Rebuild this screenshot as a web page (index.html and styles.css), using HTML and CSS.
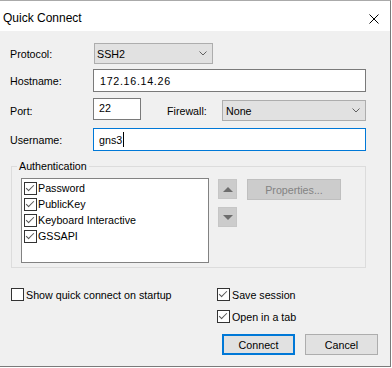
FILE: index.html
```html
<!DOCTYPE html>
<html lang="en">
<head>
    <meta charset="UTF-8">
    <title>Quick Connect</title>
    <link rel="stylesheet" href="styles.css">
</head>
<body>
    <div class="window">
        <!-- Title bar -->
        <div class="titlebar">
            <span class="title">Quick Connect</span>
            <svg class="close" width="10" height="10" viewBox="0 0 10 10">
                <path d="M0.5 0.5L9.5 9.5M9.5 0.5L0.5 9.5" stroke="#000" stroke-width="1" fill="none"/>
            </svg>
        </div>

        <div class="content">
            <!-- Connection fields -->
            <div class="row row-protocol">
                <span class="label">Protocol:</span>
                <div class="combo combo-protocol">
                    <span>SSH2</span>
                    <svg class="chevron" width="8" height="5" viewBox="0 0 8 5"><polyline points="0.5,0.5 4,4 7.5,0.5" fill="none" stroke="#606060"/></svg>
                </div>
            </div>

            <div class="row row-host">
                <span class="label">Hostname:</span>
                <div class="field field-host">172.16.14.26</div>
            </div>

            <div class="row row-port">
                <span class="label">Port:</span>
                <div class="field field-port">22</div>
                <span class="firewall-label">Firewall:</span>
                <div class="combo combo-firewall">
                    <span>None</span>
                    <svg class="chevron" width="8" height="5" viewBox="0 0 8 5"><polyline points="0.5,0.5 4,4 7.5,0.5" fill="none" stroke="#606060"/></svg>
                </div>
            </div>

            <div class="row row-user">
                <span class="label">Username:</span>
                <div class="field field-user">gns3<span class="caret"></span></div>
            </div>

            <!-- Authentication group -->
            <fieldset class="group">
                <legend>Authentication</legend>
                <div class="group-body">
                    <div class="listbox">
                        <div class="list-item"><span class="cb checked"></span><span>Password</span></div>
                        <div class="list-item"><span class="cb checked"></span><span>PublicKey</span></div>
                        <div class="list-item"><span class="cb checked"></span><span>Keyboard Interactive</span></div>
                        <div class="list-item"><span class="cb checked"></span><span>GSSAPI</span></div>
                    </div>
                    <div class="arrows">
                        <div class="arrow-btn">
                            <svg width="10" height="5" viewBox="0 0 10 5"><polygon points="0,5 5,0 10,5" fill="#6d6d6d"/></svg>
                        </div>
                        <div class="arrow-btn">
                            <svg width="10" height="5" viewBox="0 0 10 5"><polygon points="0,0 10,0 5,5" fill="#6d6d6d"/></svg>
                        </div>
                    </div>
                    <div class="props-btn">Properties...</div>
                </div>
            </fieldset>

            <!-- Options -->
            <div class="options">
                <div class="opt-left">
                    <div class="check-item"><span class="cb"></span><span>Show quick connect on startup</span></div>
                </div>
                <div class="opt-right">
                    <div class="check-item"><span class="cb checked"></span><span>Save session</span></div>
                    <div class="check-item"><span class="cb checked"></span><span>Open in a tab</span></div>
                </div>
            </div>

            <!-- Buttons -->
            <div class="buttons">
                <div class="btn btn-default">Connect</div>
                <div class="btn">Cancel</div>
            </div>
        </div>
    </div>
</body>
</html>
```

FILE: styles.css
```css
/* Page */
body {
    margin: 0;
    background-color: #fff;
    font-family: "Liberation Sans", Arial, sans-serif;
    font-size: 10.7px;
    color: #000;
}

/* Window frame */
.window {
    width: 390px;
    height: 365px;
    background-color: #f0f0f0;
    border-top: 1px solid #aaa;
    border-right: 1px solid #7a7a7a;
    border-bottom: 1px solid #7a7a7a;
}

.titlebar {
    height: 30px;
    box-sizing: border-box;
    padding: 4px 11px 0 3px;
    background-color: #fff;
    display: flex;
    align-items: center;
    justify-content: space-between;
}

.title {
    font-size: 12px;
}

.close {
    margin-top: 2px;
}

/* Content */
.content {
    padding: 12px 12px 0 10px;
}

.row {
    display: flex;
    align-items: center;
}

.label {
    width: 83px;
}

.combo {
    box-sizing: border-box;
    height: 21px;
    padding: 0 5px 0 2px;
    background-color: #e1e1e1;
    border: 1px solid #adadad;
    display: flex;
    align-items: center;
    justify-content: space-between;
}

.combo-protocol {
    width: 119px;
    margin-left: 1px;
}

.field {
    box-sizing: border-box;
    width: 273px;
    height: 23px;
    padding: 0 5px;
    background-color: #fff;
    border: 1px solid #7a7a7a;
    display: flex;
    align-items: center;
}

.row-host {
    margin-top: 5px;
}

.field-host {
    padding-left: 6px;
    letter-spacing: 0.7px;
}

.row-port {
    margin-top: 6px;
    height: 23px;
    align-items: flex-start;
}

.row-port .label,
.firewall-label {
    align-self: center;
    margin-top: 2px;
}

.field-port {
    width: 48px;
    height: 22px;
    align-items: flex-start;
    padding-top: 3px;
}

.firewall-label {
    width: 55px;
    margin-left: 26px;
}

.combo-firewall {
    width: 144px;
    margin-top: 2px;
    padding-left: 3px;
}

.row-user {
    margin-top: 7px;
}

.field-user {
    border-color: #0078d7;
}

.caret {
    width: 1px;
    height: 15px;
    margin-left: 1px;
    background-color: #000;
}

/* Authentication group box */
.group {
    box-sizing: border-box;
    width: 355px;
    margin: 9px 0 0 1px;
    padding: 5px 9px 4px 9px;
    border: 1px solid #dcdcdc;
}

.group legend {
    padding: 0 2px;
    margin-left: -4px;
    line-height: 13px;
}

.group-body {
    display: flex;
    align-items: flex-start;
}

.listbox {
    box-sizing: border-box;
    width: 188px;
    height: 85px;
    padding: 1px 2px;
    background-color: #fff;
    border: 1px solid #828282;
}

.list-item {
    height: 16px;
    display: flex;
    align-items: center;
}

.list-item .cb {
    margin-right: 1px;
}

.arrows {
    margin: 1px 0 0 9px;
    display: flex;
    flex-direction: column;
    gap: 8px;
}

.arrow-btn {
    box-sizing: border-box;
    width: 19px;
    height: 20px;
    background-color: #cccccc;
    border: 1px solid #c6c6c6;
    display: flex;
    align-items: center;
    justify-content: center;
}

.props-btn {
    box-sizing: border-box;
    width: 94px;
    height: 21px;
    margin: 1px 0 0 10px;
    background-color: #cccccc;
    border: 1px solid #bfbfbf;
    color: #838383;
    display: flex;
    align-items: center;
    justify-content: center;
}

/* Checkboxes */
.cb {
    position: relative;
    flex: none;
    box-sizing: border-box;
    width: 13px;
    height: 13px;
    background-color: #fff;
    border: 1px solid #333;
}

.cb.checked::after {
    content: "";
    position: absolute;
    left: 3px;
    top: 0;
    width: 3px;
    height: 7px;
    border-right: 1px solid #555;
    border-bottom: 1px solid #555;
    transform: rotate(45deg);
}

/* Options */
.options {
    display: flex;
    margin: 20px 0 0 1px;
}

.opt-left {
    width: 206px;
}

.opt-right {
    display: flex;
    flex-direction: column;
    gap: 9px;
}

.check-item {
    height: 13px;
    display: flex;
    align-items: center;
}

.check-item .cb {
    margin-right: 2px;
}

/* Buttons */
.buttons {
    display: flex;
    justify-content: flex-end;
    gap: 10px;
    margin-top: 11px;
}

.btn {
    box-sizing: border-box;
    width: 73px;
    height: 21px;
    background-color: #e1e1e1;
    border: 1px solid #adadad;
    display: flex;
    align-items: center;
    justify-content: center;
}

.btn-default {
    border: 2px solid #0078d7;
}
```
